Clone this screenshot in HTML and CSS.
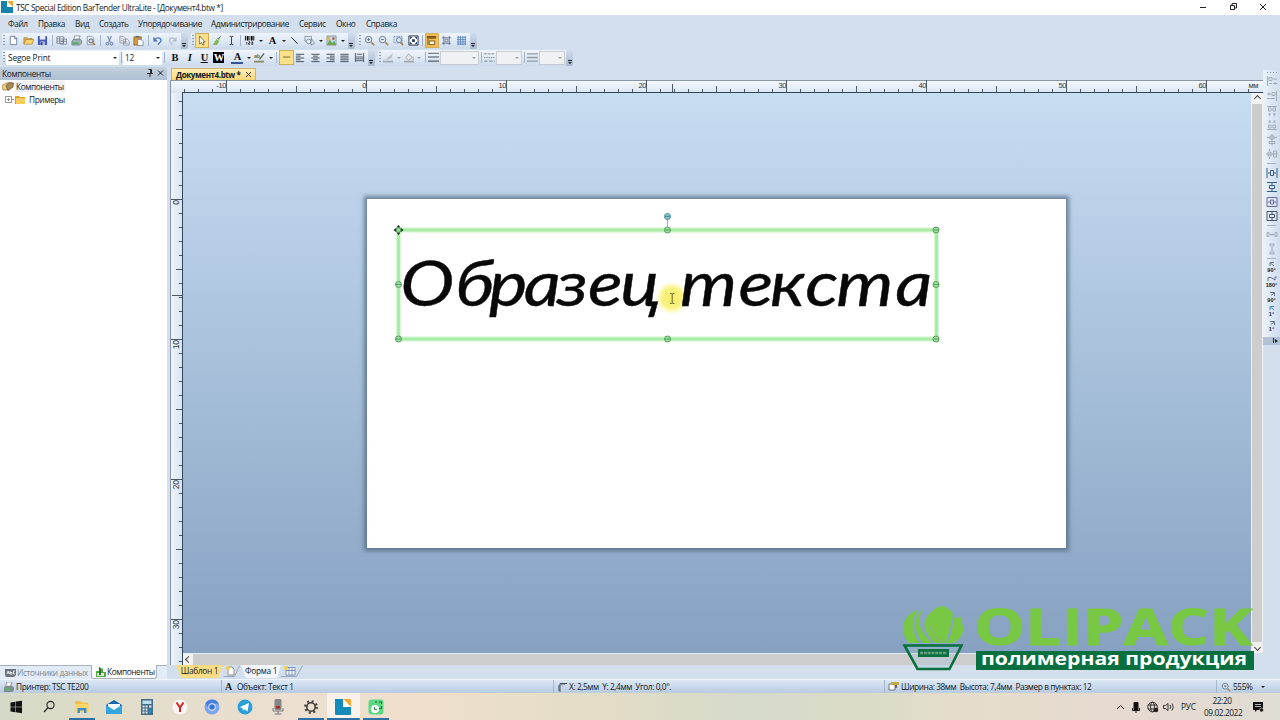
FILE: index.html
```
<!DOCTYPE html>
<html lang="ru">
<head>
  <meta charset="UTF-8">
  <title>TSC Special Edition BarTender UltraLite</title>
  <link rel="stylesheet" href="styles.css">
</head>
<body>
<div class="window">

  <!-- Title bar -->
  <header class="titlebar">
    <svg class="app-icon" width="12" height="12" viewBox="0 0 12 12"><path d="M0 0h6v6h6v6H0z" fill="#1583ac"/><path d="M6 0h6v6z" fill="#efa52f"/></svg>
    <span class="title">TSC Special Edition BarTender UltraLite - [Документ4.btw *]</span>
    <svg class="win-buttons" width="70" height="12" viewBox="0 0 70 12" fill="none" stroke="#222"><path d="M1 6.5h6M31.500 4.500h4v4h-4zM33 4V2.500h4.500v4.500H36M61 3l6 6M67 3l-6 6"/></svg>
  </header>

  <nav class="menubar">
    <span class="m1">Файл</span><span class="m2">Правка</span><span class="m3">Вид</span><span class="m4">Создать</span><span class="m5">Упорядочивание</span><span class="m6">Администрирование</span><span class="m7">Сервис</span><span class="m8">Окно</span><span>Справка</span>
  </nav>

  <!-- Standard toolbars -->
  <div class="toolbars">
    <div class="toolbar">
      <i class="grip"></i>
      <b class="btn"><svg viewBox="0 0 12 12"><path d="M2.500 1.500h5l2 2v7h-7z" fill="#fff" stroke="#71809a"/><path d="M7 1v3h3" fill="none" stroke="#71809a"/></svg></b>
      <b class="btn"><svg viewBox="0 0 12 12"><path d="M1 10V3h4l1 1h4v2" fill="#e9b94c" stroke="#8d7030" stroke-width=".7"/><path d="M1 10l2-5h9l-2 5z" fill="#fbd66e" stroke="#9a7a32" stroke-width=".7"/></svg></b>
      <b class="btn"><svg viewBox="0 0 12 12"><path d="M1 1h9l1 1v9H1z" fill="#4659bd"/><path d="M3 1h6v4H3z" fill="#e7edfa"/><path d="M3.500 7h5v4h-5z" fill="#b9c4e5"/><path d="M4 8h2v3H4z" fill="#26397e"/></svg></b>
      <i class="sep"></i>
      <b class="btn"><svg viewBox="0 0 12 12"><path d="M1 2h7.500v7H1zM1 4.300h7.500M1 6.600h7.500M4 2v7M8.500 4.500h3v5.500H5V9" fill="#fff" stroke="#596a82" stroke-width=".8"/><path d="M5 7h6.500M8 4.500V10" stroke="#596a82" stroke-width=".8"/></svg></b>
      <b class="btn"><svg viewBox="0 0 12 12"><path d="M4 1h6L8.500 5H3z" fill="#fff" stroke="#667" stroke-width=".7"/><path d="M1 6.500L3 4.500h7L11.500 6v3L9.500 11H1z" fill="#9fb0b4" stroke="#5b6a6c" stroke-width=".7"/><path d="M2 8h6v2H2z" fill="#45b557"/></svg></b>
      <b class="btn"><svg viewBox="0 0 12 12"><path d="M2.500 1.500h5l2 2v7h-7z" fill="#fff" stroke="#71809a" stroke-width=".8"/><circle cx="6.500" cy="6.500" r="2.300" fill="#cfe0f2" stroke="#44546a"/><path d="M8 8l3 3" stroke="#a3763d" stroke-width="1.500"/></svg></b>
      <i class="sep"></i>
      <b class="btn"><svg viewBox="0 0 12 12" fill="none" stroke="#576b9b"><path d="M4 1l3 7M8 1L5 8"/><circle cx="3.700" cy="9.500" r="1.500"/><circle cx="8.300" cy="9.500" r="1.500"/></svg></b>
      <b class="btn"><svg viewBox="0 0 12 12" fill="#fff" stroke="#6d7c98" stroke-width=".8"><path d="M1 1.500h4l2 2v5H1zM5 4.500h4l2 2v4.500H5z"/><path d="M2 4h2M2 6h2M6 7h3M6 9h4"/></svg></b>
      <b class="btn"><svg viewBox="0 0 12 12"><path d="M1 2h8v9H1z" fill="#d99a3a" stroke="#7d5b29" stroke-width=".8"/><path d="M3 1h4v2H3z" fill="#687080"/><path d="M5 5h4l2 2v4.500H5z" fill="#fff" stroke="#6d7c98" stroke-width=".8"/></svg></b>
      <i class="sep"></i>
      <b class="btn"><svg viewBox="0 0 12 12"><path d="M3 5c3-3.500 8-1.500 6.500 2L6.500 10.500" fill="none" stroke="#4776c5" stroke-width="1.500"/><path d="M1.500 2v5h5z" fill="#4776c5"/></svg></b>
      <b class="btn"><svg viewBox="0 0 12 12"><path d="M9 5C6 1.500 1.500 3.500 3 7l3 3.500" fill="none" stroke="#b2bdcc" stroke-width="1.300"/><path d="M10.500 2v5h-5z" fill="#b2bdcc"/></svg></b>
      <i class="more"></i>
    </div>
    <div class="toolbar">
      <i class="grip"></i>
      <b class="btn on"><svg viewBox="0 0 12 12"><path d="M4 1v9l2-2 1.500 3 1.500-.8L7.500 7.500H10z" fill="#fff" stroke="#5c5030" stroke-width=".8"/></svg></b>
      <b class="btn"><svg viewBox="0 0 12 12"><path d="M11.500 0L7 4l1.500 1.500z" fill="#777"/><path d="M7 3l2.500 2.500L6.500 11 2 10.500z" fill="#85b84d"/><path d="M6.500 4l2.500 2.500" stroke="#eaf2da"/></svg></b>
      <b class="btn"><svg viewBox="0 0 12 12" fill="none" stroke="#333"><path d="M4 1.500h1.500l.5.500.5-.5H8M6 2v8M4 10.500h1.500l.5-.5.5.500H8"/></svg></b>
      <i class="sep"></i>
      <b class="btn"><svg viewBox="0 0 12 12"><path d="M1 1h1v5H1zM3 1h2v5H3zM6 1h.8v5H6zM7.600 1h1.800v5H7.600zM10.200 1h1v5h-1z"/><path d="M3 7.500v3M5 7.500h1.500v1.300H5v1.400h1.500M8 7.500h1.500V9H8M9.500 9v1.300H8" fill="none" stroke="#111" stroke-width=".8"/></svg></b>
      <i class="drop"></i>
      <b class="btn serif">A</b>
      <i class="drop"></i>
      <b class="btn"><svg viewBox="0 0 12 12"><path d="M2.500 2.500l7 7" stroke="#222"/></svg></b>
      <b class="btn"><svg viewBox="0 0 12 12" fill="#e8eff8" stroke="#66788e" stroke-width=".8"><path d="M1 1.500h7v5H1z"/><circle cx="5" cy="7" r="2.500"/><path d="M8 4l3.500 5-4 2z"/></svg></b>
      <i class="drop"></i>
      <b class="btn"><svg viewBox="0 0 12 12"><path d="M1 1h10v10H1z" fill="#b9d9f2" stroke="#777" stroke-width=".7"/><path d="M1 11l3-6 3 4 2-3 2 5z" fill="#6da44a"/><path d="M1 2h3v4H1z" fill="#e4b043"/><circle cx="8" cy="4" r="1.500" fill="#c6633c"/></svg></b>
      <i class="drop"></i>
      <i class="more"></i>
    </div>
    <div class="toolbar">
      <i class="grip"></i>
      <b class="btn"><svg viewBox="0 0 12 12" fill="#e7f0fa" stroke="#5c6e85"><path d="M8 8l3 3" stroke="#a98550" stroke-width="1.800"/><circle cx="5" cy="5" r="3.500"/><path d="M3.300 5h3.400M5 3.300v3.400"/></svg></b>
      <b class="btn"><svg viewBox="0 0 12 12" fill="#e7f0fa" stroke="#5c6e85"><path d="M8 8l3 3" stroke="#a98550" stroke-width="1.800"/><circle cx="5" cy="5" r="3.500"/><path d="M3.300 5h3.400"/></svg></b>
      <b class="btn"><svg viewBox="0 0 12 12" fill="#dbe8f6" stroke="#5c6e85" stroke-width=".9"><path d="M1 1.500h9v7H1z" stroke="#6079a8" stroke-dasharray="1.500 1"/><path d="M8 8l3 3" stroke="#a98550" stroke-width="1.800"/><circle cx="6.500" cy="5.500" r="2.800"/></svg></b>
      <b class="btn"><svg viewBox="0 0 12 12"><path d="M1 1h10v10H1z" fill="#fff" stroke="#1d2c48"/><path d="M2 2h3L2 5zM10 2v3L7 2zM2 10V7l3 3zM10 10H7l3-3zM4.500 4.500h3v3h-3z" fill="#2c406a"/></svg></b>
      <i class="sep"></i>
      <b class="btn on deep"><svg viewBox="0 0 12 12"><path d="M1 1h10v3H1z" fill="#7b5a20"/><path d="M1 4h2v7H1z" fill="#b68735"/><path d="M3.500 6.500h6v4h-6z" fill="#fff8df" stroke="#6e5220"/></svg></b>
      <b class="btn"><svg viewBox="0 0 12 12" fill="none" stroke="#596b86" stroke-width=".9"><path d="M3 1v10M9 1v10M1 3h10M1 9h10"/><path d="M4.500 4.500h3v3h-3z" fill="#fff"/></svg></b>
      <b class="btn"><svg viewBox="0 0 12 12" fill="none" stroke="#4877b8" stroke-width=".8"><path d="M2.500 1v10M5 1v10M7.500 1v10M10 1v10M1 2.500h10M1 5h10M1 7.500h10M1 10h10"/></svg></b>
      <i class="more"></i>
    </div>
  </div>

  <!-- Text and line format toolbars -->
  <div class="toolbars">
    <div class="toolbar">
      <i class="grip"></i>
      <span class="combo font">Segoe Print<i class="drop"></i></span>
      <i class="sep"></i>
      <span class="combo size">12<i class="drop"></i></span>
      <i class="sep wide"></i>
      <b class="btn serif">B</b>
      <b class="btn serif it">I</b>
      <b class="btn serif un">U</b>
      <b class="btn serif inv">W</b>
      <i class="sep blank"></i>
      <b class="btn serif color">A</b>
      <i class="drop"></i>
      <b class="btn"><svg viewBox="0 0 12 12"><path d="M0 9.500h11v2H0z" fill="#8b8c5d"/><path d="M11.500 2L7 8 5.500 8.500 6 7l4.500-6z" fill="#555"/><text x="0" y="6" class="ab">ab</text></svg></b>
      <i class="drop"></i>
      <i class="sep"></i>
      <b class="btn on"><svg viewBox="0 0 12 12"><path d="M2 5.500h8" stroke="#76612a"/></svg></b>
      <b class="btn"><svg viewBox="0 0 12 12" stroke="#3d4654"><path d="M1 2.500h9M1 4.500h5M1 6.500h9M1 8.500h5M1 10.500h9"/></svg></b>
      <b class="btn"><svg viewBox="0 0 12 12" stroke="#3d4654"><path d="M1.500 2.500h9M3.500 4.500h5M1.500 6.500h9M3.500 8.500h5M1.500 10.500h9"/></svg></b>
      <b class="btn"><svg viewBox="0 0 12 12" stroke="#3d4654"><path d="M1.500 2.500h9M5.500 4.500h5M1.500 6.500h9M5.500 8.500h5M1.500 10.500h9"/></svg></b>
      <b class="btn"><svg viewBox="0 0 12 12" stroke="#3d4654"><path d="M1.500 2.500h9M1.500 4.500h9M1.500 6.500h9M1.500 8.500h9M1.500 10.500h9"/></svg></b>
      <b class="btn"><svg viewBox="0 0 12 12" stroke="#4a5362"><path d="M1.500 1v10M10.500 1v10M3 2.500h6M2 5.500h8M2 7.500h8M2 9.500h8"/></svg></b>
      <i class="more"></i>
    </div>
    <div class="toolbar lines">
      <i class="grip"></i>
      <b class="btn"><svg viewBox="0 0 12 12"><path d="M0 9.500h11v2H0z" fill="#a6aaae"/><path d="M11 1L9 7l-6 2 2-3z" fill="#bcc1c6"/></svg></b>
      <i class="drop off"></i>
      <b class="btn"><svg viewBox="0 0 12 12"><path d="M0 9.500h11v2H0z" fill="#a6aaae"/><path d="M5 2l4 4-4 3-3-3z" fill="#e4e8ec" stroke="#a4a9ae"/><path d="M10 5v4" stroke="#a4a9ae"/></svg></b>
      <i class="drop off"></i>
      <i class="sep"></i>
      <b class="btn"><svg viewBox="0 0 12 12" stroke="#7a838c"><path d="M0 1.500h12M0 5.500h12" stroke-width="1.500"/><path d="M0 10h12" stroke-width="2"/></svg></b>
      <span class="combo c1"><i class="drop off"></i></span>
      <i class="sep"></i>
      <b class="btn"><svg viewBox="0 0 12 12" stroke="#7a838c"><path d="M0 2h12" stroke-dasharray="3 1"/><path d="M0 6h12" stroke-dasharray="1.500 1"/><path d="M0 10h12" stroke-dasharray="4 1.500"/></svg></b>
      <span class="combo c2"><i class="drop off"></i></span>
      <i class="sep"></i>
      <b class="btn"><svg viewBox="0 0 12 12" stroke="#929aa2" stroke-width="1.500"><path d="M0 2h12M0 6h12M0 10h12"/></svg></b>
      <span class="combo c3"><i class="drop off"></i></span>
      <i class="more"></i>
    </div>
  </div>

  <main class="workspace">
    <!-- Components panel -->
    <aside class="panel">
      <div class="panel-head">
        <span>Компоненты</span>
        <svg width="20" height="10" viewBox="0 0 20 10" fill="none" stroke="#222"><path d="M3.500 1.500h3v4M2 5.500h6M5 6v3M5.700 1.500v4M13 2.500l5 5M18 2.500l-5 5"/></svg>
      </div>
      <div class="tree">
        <div class="node">
          <svg width="12" height="11" viewBox="0 0 12 11"><path d="M0 4.500L4 2h3l1 2-2 5H1z" fill="#f0cd80" stroke="#9a7a3c" stroke-width=".7"/><path d="M4 5l3-3.500L11.500 2 11 6 6 9.500z" fill="#a88a56" stroke="#5f4a28" stroke-width=".7"/></svg>
          <span class="sel">Компоненты</span>
        </div>
        <div class="node child">
          <svg width="20" height="11" viewBox="0 0 20 11"><path d="M.5 2.500h6v6h-6zM2 5.500h3M3.500 4v3M7 5.500h2" fill="#fff" stroke="#8a8a8a" stroke-width=".9"/><path d="M10 2h4l1 1h5v7H10z" fill="#d99f28"/><path d="M11 4h9v6h-9z" fill="#f9cd58"/></svg>
          <span>Примеры</span>
        </div>
      </div>
      <div class="panel-tabs">
        <span class="ptab"><svg width="11" height="9" viewBox="0 0 11 9"><path d="M0 1h11v6l-2 2H1L0 7z" fill="#6d737a"/><path d="M2 6l1-3 1 3M5 3v3h2V4.500H5M10 3H8.500v3H10" stroke="#fff" stroke-width=".8" fill="none"/></svg>Источники данных</span>
        <span class="ptab active"><svg width="11" height="12" viewBox="0 0 11 12"><path d="M1 5h3V1l4 2v3h3v5H1z" fill="#54a741"/><path d="M2 7h7v3H2z" fill="#d7ecd0"/><path d="M4 1l2 2v6H4z" fill="#2e6d33"/></svg>Компоненты</span>
      </div>
    </aside>

    <!-- Document -->
    <section class="document">
      <div class="doc-tabs"><span class="doc-tab">Документ4.btw * <svg width="7" height="7" viewBox="0 0 7 7"><path d="M1 1l5 5M6 1L1 6" stroke="#333"/></svg></span></div>
      <div class="editor">
        <svg class="ruler-top" id="rulerTop" width="1092" height="13"></svg>
        <svg class="ruler-left" id="rulerLeft" width="12" height="572"></svg>
        <div class="canvas">
          <div class="sheet">
            <svg width="699" height="349" viewBox="0 0 699 349">
              <defs>
                <radialGradient id="glow"><stop offset="0" stop-color="#f7ee66"/><stop offset=".6" stop-color="#faf283"/><stop offset="1" stop-color="#fdf9b0" stop-opacity="0"/></radialGradient>
              </defs>
              <path class="frame-glow" d="M31.500 31h538v109h-538z"/>
              <path class="frame" d="M31.500 31h538v109h-538z"/>
              <circle cx="305" cy="99" r="17" fill="url(#glow)"/>
              <g transform="scale(1.17 1)">
                <text class="sample" x="28.500 75.500 104.300 134 162 189 216.500" y="107">Образец</text>
                <text class="sample" x="267.500 317.500 344.400 374.500 401 451.500" y="107">текста</text>
              </g>
              <path d="M300.500 18v12" stroke="#7fc4c8"/>
              <g class="handles">
                <circle cx="300.500" cy="31" r="3"/><circle cx="569" cy="31" r="3"/>
                <circle cx="31.500" cy="85.500" r="3"/><circle cx="569" cy="85.500" r="3"/>
                <circle cx="31.500" cy="140" r="3"/><circle cx="300.500" cy="140" r="3"/><circle cx="569" cy="140" r="3"/>
                <path d="M298 31h5M567 31h5M29 85.500h5M567 85.500h5M29 140h5M298 140h5M567 140h5"/>
              </g>
              <circle cx="300.500" cy="17.500" r="3" fill="#7fc6d2" stroke="#4f8f9c"/><path d="M298 17.500h5" stroke="#4f8f9c"/>
              <path d="M31.500 26l2 2.500h-4zM31.500 36l2-2.500h-4zM26.500 31l2.500-2v4zM36.500 31l-2.500-2v4z" fill="#222"/><circle cx="31.500" cy="31" r="2.500" fill="#8fdc8f" stroke="#3c7b45" stroke-width=".8"/>
              <path d="M303 94.500h1.500l.7.500.7-.5h1.500M305.200 95v9M303 104.500h1.500l.7-.5.7.500h1.500" fill="none" stroke="#6a662a"/>
            </svg>
          </div>
        </div>
        <div class="vscroll"><i class="up"></i><b></b><i class="down"></i></div>
        <div class="hscroll"><i></i></div>
      </div>
      <div class="sheet-tabs">
        <span class="stab active">Шаблон 1</span>
        <svg width="18" height="13" viewBox="0 0 18 13"><path d="M.5 11.500h11l5-11" fill="none" stroke="#8a97a8" stroke-width=".8"/><path d="M5 2h4l2 2v6H5z" fill="#fff" stroke="#777" stroke-width=".8"/><circle cx="5" cy="3" r="2" fill="#f3cf42"/></svg>
        <span class="stab">Форма 1</span>
        <svg width="26" height="13" viewBox="0 0 26 13"><path d="M0 11.500h15.500l6-11" fill="none" stroke="#8a97a8" stroke-width=".8"/><path d="M5 2.500h9V10H5zM5 5.500h9M8 3v7M11 3v7" fill="#fff" stroke="#5b7aac" stroke-width=".8"/><circle cx="5" cy="3" r="2" fill="#f3cf42"/></svg>
      </div>
    </section>

    <!-- Arrange toolbar -->
    <aside class="arrange">
      <i class="dots"></i>
      <svg class="off" viewBox="0 0 12 12"><path d="M1.500 1v10M3 2.500h3v3H3zM7 4h4M3 8.500h3M7 8.500h4M9 7v3"/></svg>
      <svg class="off" viewBox="0 0 12 12"><path d="M10.500 1v10M6 2.500h3v3H6zM1 4h4M1 8.500h8M3 2.500v3"/></svg>
      <svg class="off" viewBox="0 0 12 12"><path d="M1 1.500h10M2.500 3h2.500v3H2.500zM7 3h2.500v3H7zM3.700 8v3M8.300 8v3M2.500 9h2.500M7 9h2.500"/></svg>
      <svg class="off" viewBox="0 0 12 12"><path d="M1 10.500h10M2.500 6h2.500v3H2.500zM7 6h2.500v3H7zM3.700 1v3M8.300 1v3M2.500 3h2.500M7 3h2.500"/></svg>
      <svg class="off" viewBox="0 0 12 12"><path d="M6 0v12M1 3.500h3M8 3.500h3M4 2h4v3H4zM3 7.500h6v2H3z"/></svg>
      <svg class="off" viewBox="0 0 12 12"><path d="M0 6h12M2 4h3v4H2zM7.500 3h3v6h-3zM3.500 1v2M3.500 9v2"/></svg>
      <i class="hsep"></i>
      <svg viewBox="0 0 12 12"><path d="M1 1v10M11 1v10M4.500 3.500h3v5h-3zM2 6h2.500M7.500 6H10"/></svg>
      <svg viewBox="0 0 12 12"><path d="M1 1.500h10M1 10.500h10M3.500 4.500h5v3h-5zM6 2v2.500M6 7.500V10"/></svg>
      <svg class="violet" viewBox="0 0 12 12"><path d="M1 1.500h10v9H1zM4.500 4h3v4h-3zM2 6h2.500M7.500 6H10"/></svg>
      <svg class="dark" viewBox="0 0 12 12"><path d="M1 1.500h10v9H1zM3.500 4.500h5v3h-5zM6 2v2.500M6 7.500V10"/></svg>
      <i class="hsep"></i>
      <svg class="off" viewBox="0 0 12 12"><path d="M1 3.500h2v4H1zM9 3.500h2v4H9zM4 5.500h4M5 4.500v2M7 4.500v2"/></svg>
      <svg class="off" viewBox="0 0 12 12"><path d="M4 1h4v2H4zM4 9h4v2H4zM6 4v4"/></svg>
      <i class="hsep"></i>
      <span class="rot"><svg viewBox="0 0 12 6"><path d="M4 5V1.500h4M8 5L4.500 2"/></svg>90°</span>
      <span class="rot"><svg viewBox="0 0 12 6"><path d="M2 5V1.500h3L9 4V1h2"/></svg>180°</span>
      <span class="rot"><svg viewBox="0 0 12 6"><path d="M4 1.500h4.500V5M5 4.500L8 2"/></svg>90°</span>
      <span class="rot blue"><svg viewBox="0 0 12 6"><path d="M4 5V1.500h4M8 5L4.500 2"/></svg>1°</span>
      <span class="rot"><svg viewBox="0 0 12 6"><path d="M4 1.500h4.500V5M5 4.500L8 2"/></svg>1°</span>
      <i class="more-v"></i>
    </aside>
  </main>

  <footer class="statusbar">
    <span class="s1"><svg width="11" height="10" viewBox="0 0 12 11"><path d="M4 0h6L8 5H3z" fill="#fff" stroke="#667" stroke-width=".7"/><path d="M1 6l2-2h7l2 2v3l-2 2H1z" fill="#7e8d90"/><path d="M2 7h6v2H2z" fill="#55ba62"/></svg>Принтер: TSC TE200</span>
    <span class="s2"><b>A</b>Объект: Текст 1</span>
    <span class="s3"><svg width="10" height="10" viewBox="0 0 10 10"><path d="M1 4h2v6M3 4V1.500h7M1 6h2M1 8h2M5 1.500v2M7 1.500v1.500" fill="none" stroke="#444f5e"/></svg>X: 2,5мм&nbsp; Y: 2,4мм&nbsp; Угол: 0,0°.</span>
    <span class="s4"><svg width="11" height="9" viewBox="0 0 11 9"><path d="M1 2h6v6H1z" fill="#fff" stroke="#556" stroke-width=".8"/><path d="M3 0h8v3H3z" fill="#c6a93d"/><path d="M7 3h2v3H7z" fill="#667"/></svg>Ширина: 38мм&nbsp; Высота: 7,4мм&nbsp; Размер в пунктах: 12</span>
    <span class="s5"><svg width="10" height="10" viewBox="0 0 12 12" fill="#e7f0fa" stroke="#5c6e85"><path d="M8 8l3 3" stroke="#a98550" stroke-width="1.800"/><circle cx="5" cy="5" r="3.500"/><path d="M3.300 5h3.400M5 3.300v3.400"/></svg>555%<i class="drop"></i></span>
  </footer>

  <!-- Windows taskbar -->
  <footer class="taskbar">
    <span class="app"><svg viewBox="0 0 18 18"><path d="M3.500 4.500l5-.8v5H3.500zM9 3.600l6-.9v6H9zM3.500 9.200h5v5l-5-.8zM9 9.200h6v6l-6-.9z" fill="#111"/></svg></span>
    <span class="app"><svg viewBox="0 0 18 18"><circle cx="10.500" cy="7" r="3.600" fill="none" stroke="#222" stroke-width="1.100"/><path d="M8 9.600l-4 4.400" stroke="#222" stroke-width="1.200"/></svg></span>
    <span class="app run"><svg viewBox="0 0 18 18"><path d="M2 3h5l1.500 1.500H15V14H2z" fill="#f3c04a"/><path d="M2 6h14v8H2z" fill="#fbd56d"/><path d="M4.500 15v-5h9v5h-2.500v-2.500h-4V15z" fill="#3d8fd0"/></svg></span>
    <span class="app"><svg viewBox="0 0 18 18"><path d="M1 7l8-5 8 5v9H1z" fill="#1665ab"/><path d="M3 6h12v6H3z" fill="#f2f8fc"/><path d="M1 7l8 5 8-5v9H1z" fill="#32a5df"/></svg></span>
    <span class="app"><svg viewBox="0 0 18 18"><path d="M3 1h12v16H3z" fill="#466d85"/><path d="M4.500 2.500h9v3.500h-9z" fill="#b9dff1"/><g fill="#d7e4ea"><path d="M4.500 7.500h2v2h-2zM7.500 7.500h2v2h-2zM4.500 10.500h2v2h-2zM7.500 10.500h2v2h-2zM4.500 13.500h2v2h-2zM7.500 13.500h2v2h-2zM11 7.500h2.500v2H11z"/></g><path d="M11 10.500h2.500v5H11z" fill="#2588c6"/></svg></span>
    <span class="app"><svg viewBox="0 0 18 18"><circle cx="9" cy="9" r="7.500" fill="#fbf6f2"/><path d="M5.500 4.500L9 9.500l3.500-5M9 9v5" fill="none" stroke="#d5222a" stroke-width="2"/></svg></span>
    <span class="app"><svg viewBox="0 0 18 18"><circle cx="9" cy="9" r="7.500" fill="#7ba5ee"/><path d="M9 1.500a7.500 7.500 0 0 1 6.700 4.200H9a3.500 3.500 0 0 0-3 5L2.500 5.300A7.500 7.500 0 0 1 9 1.500z" fill="#477fdc"/><circle cx="9" cy="9" r="3.700" fill="#eef4fc"/><circle cx="9" cy="9" r="2.800" fill="#3973d8"/></svg></span>
    <span class="app"><svg viewBox="0 0 18 18"><circle cx="9" cy="9" r="7.500" fill="#2d9fd8"/><path d="M4 9l9-4-1.500 8.500-3-2.200-1.500 1.500-.5-2.500z" fill="#fff"/></svg></span>
    <span class="app"><svg viewBox="0 0 18 18"><rect x="5.500" y="1" width="7" height="11" rx="1.500" fill="#858585"/><path d="M7 8h4v2.500H7z" fill="#a52c20"/><path d="M4 10v3h10v-3M9 13v3M5.500 16h7" fill="none" stroke="#777"/></svg></span>
    <span class="app run"><svg viewBox="0 0 18 18"><circle cx="9" cy="9" r="4.200" fill="none" stroke="#3e3b39" stroke-width="1.600"/><circle cx="9" cy="9" r="5.900" fill="none" stroke="#3e3b39" stroke-width="2" stroke-dasharray="2 2.630"/></svg></span>
    <span class="app run current"><svg viewBox="0 0 18 18"><path d="M1 1h8v8h8v7a1 1 0 0 1-1 1H2a1 1 0 0 1-1-1z" fill="#148cb9"/><path d="M9 1h7a1 1 0 0 1 1 1v7z" fill="#f3a72e"/><path d="M9 1l8 8H9z" fill="#fff"/></svg></span>
    <span class="app run"><svg viewBox="0 0 18 18"><rect x="1.500" y="1.500" width="15" height="15" rx="3" fill="#5bd982"/><path d="M8 4h2M12 4h2.500v2M14.500 8v2.500H12" fill="none" stroke="#176a38"/><circle cx="8" cy="11" r="4" fill="#fff"/><path d="M7.500 9v2.500H10" fill="none" stroke="#2b8d4d"/></svg></span>
    <div class="tray">
      <svg width="60" height="14" viewBox="0 0 60 14"><path d="M1 9l3.500-3.500L8 9" fill="none" stroke="#222"/><rect x="17.500" y="2" width="5" height="8" rx="1" fill="#111"/><path d="M16.500 8v2.500h7V8M20 10.500V13" fill="none" stroke="#111"/><g fill="none" stroke="#222" stroke-width=".9"><circle cx="36.500" cy="7" r="4.800"/><ellipse cx="36.500" cy="7" rx="2" ry="4.800"/><path d="M32 5h9M32 9h9M47.500 5.500h2l2.500-2v7l-2.500-2h-2zM54 5q1.500 2 0 4M56 3.500q2.500 3.500 0 7"/></g><circle cx="40" cy="10" r="2.300" fill="#222"/></svg>
      <span class="lang">РУС</span>
      <span class="clock">22:20<br>09.02.2022</span>
      <svg width="12" height="12" viewBox="0 0 12 12"><path d="M1 1h10v8H5l-2 2V9H1z" fill="#111"/><path d="M3 3.500h6M3 5.500h6" stroke="#ddd" stroke-width=".8"/><circle cx="9.500" cy="9" r="2" fill="#111" stroke="#e6dcd0" stroke-width=".6"/></svg>
    </div>
  </footer>

  <!-- Watermark -->
  <div class="watermark">
    <svg width="72" height="72" viewBox="0 0 72 72">
      <g fill="#78c843">
        <path d="M18 9C10 11 3 18 3 28c0 6 3 10 6 14h11C12 33 10 20 18 9z"/>
        <path d="M23 8c-10 8-10 22 0 34h9C20 31 16 20 23 8z"/>
        <path d="M41 5c7 1 10 4 12 8-1 10-4 17-7 29H35C22 30 22 20 30 12c3-3 6-5 11-7z"/>
        <path d="M54 17l8-1c-2 4 2 8 1 14-1 6-6 10-10 12h-6c4-8 6-15 7-25z"/>
      </g>
      <path d="M29 22c2 9 6 16 14 19" fill="none" stroke="#8cb07a" stroke-width="1.200"/>
      <path d="M4.500 44.500h57L49.500 68h-32z" fill="#a9c2d6" fill-opacity=".35" stroke="#08703f" stroke-width="2.600"/>
      <path d="M18 48h31v8H18z" fill="#08703f"/><path d="M20 52h27" stroke="#6c9c80" stroke-width="2.500" stroke-dasharray="3 .8"/>
    </svg>
    <svg class="wm-text" width="280" height="72" viewBox="0 0 280 72">
      <path d="M4 50h278v19H4z" fill="#08703f"/>
      <text class="wm-name" x="2" y="43.500" textLength="278" lengthAdjust="spacingAndGlyphs">OLIPACK</text>
      <text class="wm-sub" x="9" y="64" textLength="266" lengthAdjust="spacingAndGlyphs">полимерная продукция</text>
    </svg>
  </div>
</div>
<script src="script.js"></script>
</body>
</html>
```
FILE: styles.css
```
* {
  box-sizing: border-box;
}

body {
  margin: 0;
  font-family: "Open Sans", "Noto Sans", sans-serif;
  font-size: 8.3px;
  letter-spacing: -0.4px;
  color: #141a24;
  background: #d3dfed;
  overflow: hidden;
}

.window {
  position: relative;
  width: 1280px;
  height: 720px;
  display: flex;
  flex-direction: column;
  white-space: nowrap;
}

/* Title and menu */
.titlebar {
  height: 15px;
  display: flex;
  align-items: center;
  background: #fff;
}

.app-icon {
  margin: 0 3px 0 1px;
}

.title {
  flex: 1;
}

.win-buttons {
  margin-right: 11px;
}

.menubar {
  height: 18px;
  display: flex;
  align-items: center;
  padding-left: 8px;
}

.m1 { width: 30px; }
.m2 { width: 37px; }
.m3 { width: 24px; }
.m4 { width: 39px; }
.m5 { width: 73px; }
.m6 { width: 88px; }
.m7 { width: 37px; }
.m8 { width: 30px; }

/* Toolbars */
.toolbars {
  height: 17px;
  display: flex;
  gap: 3px;
  padding-left: 2px;
}

.toolbar {
  height: 16px;
  display: flex;
  align-items: center;
  border-radius: 2px;
  background: linear-gradient(#eef4fb, #dbe6f4 60%, #cbd9ea);
}

.grip {
  width: 2px;
  height: 11px;
  margin: 0 1px;
  background: repeating-linear-gradient(#8798ae 0 1px, transparent 1px 3px);
}

.btn {
  width: 14.7px;
  height: 15px;
  display: flex;
  align-items: center;
  justify-content: center;
}

.btn svg {
  width: 11px;
  height: 11px;
}

.btn.on {
  background: #fbe08a;
  border: 1px solid #d1ad55;
}

.btn.deep {
  background: #f6bf55;
}

.serif {
  font-family: "Liberation Serif", serif;
  font-size: 10.5px;
  color: #111;
}

.it {
  font-style: italic;
}

.un {
  text-decoration: underline;
}

.inv {
  width: 11px;
  height: 11px;
  margin: 0 1.8px;
  color: #fff;
  background: #000;
}

.color {
  height: 12px;
  width: 12px;
  margin: 0 1.3px;
  border-bottom: 2px solid #34539a;
}

.ab {
  font: bold 6px "Liberation Sans", sans-serif;
  fill: #6b6f22;
}

.sep {
  width: 1px;
  height: 11px;
  margin: 0 1.5px;
  background: #a3b2c5;
}

.sep.wide {
  margin-right: 3px;
}

.sep.blank {
  background: none;
}

.drop {
  width: 7.7px;
  display: flex;
  justify-content: center;
}

.drop::before {
  content: "";
  border: 2px solid transparent;
  border-top: 2.5px solid #222;
  border-bottom: 0;
}

.drop.off::before {
  border-top-color: #9a9fa5;
}

.more {
  width: 7px;
  height: 16px;
  margin-left: 1px;
  display: flex;
  flex-direction: column;
  align-items: center;
  justify-content: flex-end;
  gap: 1px;
  padding-bottom: 2px;
  border-radius: 0 2px 2px 0;
  background: linear-gradient(#cfdcec, #a9bad0);
}

.more::before {
  content: "";
  width: 4px;
  height: 1px;
  background: #222;
}

.more::after {
  content: "";
  border: 2px solid transparent;
  border-top-color: #222;
  border-bottom: 0;
}

.combo {
  height: 14px;
  display: flex;
  align-items: center;
  justify-content: space-between;
  padding-left: 2px;
  letter-spacing: -0.15px;
  background: #fff;
}

.font { width: 113px; }
.size { width: 39px; }
.c1 { width: 39px; }
.c2 { width: 26px; }
.c3 { width: 26px; }

.lines .btn {
  width: 13px;
}

.lines .combo {
  justify-content: flex-end;
  background: #f0f1f2;
  border: 1px solid #c6ccd2;
}

/* Workspace */
.workspace {
  height: 613px;
  display: flex;
}

.panel {
  width: 167px;
  display: flex;
  flex-direction: column;
  background: #fff;
}

.panel-head {
  height: 13px;
  display: flex;
  align-items: center;
  justify-content: space-between;
  padding: 0 2px;
  letter-spacing: -0.3px;
  background: linear-gradient(#c2d0df, #afc0d2);
}

.tree {
  flex: 1;
}

.node {
  height: 13px;
  display: flex;
  align-items: center;
  gap: 1px;
  padding-left: 2px;
}

.sel {
  padding: 0 1px;
  background: #f1f0f2;
}

.child {
  gap: 4px;
  padding-left: 5px;
}

.panel-tabs {
  height: 14px;
  display: flex;
  background: #e3ecf6;
  border-top: 1px solid #a7b1bd;
}

.ptab {
  width: 91px;
  display: flex;
  align-items: center;
  gap: 1px;
  padding-left: 5px;
  color: #7f858c;
}

.ptab.active {
  width: 66px;
  margin-top: -1px;
  padding-left: 3px;
  color: #141a24;
  background: #fff;
  border: 1px solid #a7b1bd;
  border-top: 0;
  border-radius: 0 0 3px 3px;
}

.document {
  width: 1095px;
  padding-left: 3px;
}

.doc-tabs {
  height: 13px;
  display: flex;
  align-items: flex-end;
  padding-left: 1px;
}

.doc-tab {
  width: 85px;
  height: 12px;
  display: flex;
  align-items: center;
  justify-content: space-between;
  padding: 0 3px 0 4px;
  font-size: 8px;
  font-weight: bold;
  background: linear-gradient(#fdeeb5, #f7d573);
  border: 1px solid #c9b377;
  border-bottom: 0;
}

.editor {
  width: 1092px;
  height: 585px;
  display: grid;
  grid-template: 13px 560px 12px / 12px 1068px 12px;
  border-left: 1px solid #8996a5;
}

.ruler-top {
  grid-area: 1 / 1 / 2 / 4;
  background: linear-gradient(#8996a5 0 1px, #f4f8fd 1px, #dae6f3);
}

.ruler-left {
  grid-area: 2 / 1 / 4 / 2;
  background: linear-gradient(90deg, #edf3fa, #d9e5f2);
}

.ruler-top text,
.ruler-left text {
  font: 7.5px "Liberation Sans", sans-serif;
  text-anchor: end;
  fill: #2d3742;
}

.ruler-left text {
  font-size: 8.5px;
}

.tick {
  stroke: #4c5866;
}

.edge {
  stroke: #33475c;
}

.canvas {
  position: relative;
  overflow: hidden;
  background: linear-gradient(#c7ddf2, #86a1c1);
}

.sheet {
  position: absolute;
  left: 184px;
  top: 106px;
  width: 699px;
  height: 349px;
  background: #fff;
  box-shadow: 0 0 4px 3px rgba(75, 97, 122, 0.7);
}

.frame {
  fill: none;
  stroke: #abeaa9;
  stroke-width: 3;
}

.frame-glow {
  fill: none;
  stroke: #d9fad7;
  stroke-width: 5.5;
}

.handles circle {
  fill: #9be29b;
  stroke: #5b9b62;
}

.handles path {
  stroke: #5b9b62;
}

.sample {
  font: italic 62px Lato, "Open Sans", sans-serif;
  letter-spacing: 0;
  fill: #080808;
  stroke: #080808;
  stroke-width: 0.4;
}

.vscroll {
  display: flex;
  flex-direction: column;
  padding-left: 1px;
  background: #eef1f4;
}

.vscroll b {
  flex: 1;
  margin-right: 1px;
  background: #cdcdcd;
}

.vscroll i,
.hscroll i {
  width: 10px;
  height: 11px;
  display: flex;
  align-items: center;
  justify-content: center;
  background: #f2f2f2;
}

.vscroll i::before,
.hscroll i::before {
  content: "";
  width: 4px;
  height: 4px;
  border: solid #444;
  border-width: 1px 0 0 1px;
  transform: rotate(45deg);
}

.vscroll .down::before {
  transform: rotate(225deg);
}

.hscroll {
  grid-area: 3 / 2 / 4 / 4;
  display: flex;
  margin-right: 12px;
  background: #cdcdcd;
  border-top: 1px solid #e6edf5;
}

.hscroll i::before {
  transform: rotate(-45deg);
}

.sheet-tabs {
  height: 13px;
  display: flex;
  padding-left: 6px;
}

.stab {
  width: 40px;
  line-height: 11px;
  text-align: center;
  letter-spacing: -0.3px;
  background: #f3f7fc;
  clip-path: polygon(0 0, 100% 0, 90% 100%, 12% 100%);
}

.stab.active {
  width: 47px;
  background: #fbdc83;
}

/* Arrange toolbar */
.arrange {
  width: 17px;
  height: 275px;
  margin-left: 1px;
  margin-top: 3px;
  display: flex;
  flex-direction: column;
  align-items: center;
  gap: 2.6px;
  background: linear-gradient(90deg, #eaf2fb, #cfddee);
}

.arrange > svg {
  width: 12px;
  height: 12px;
  flex: none;
  fill: none;
  stroke: #3a5d84;
}

.arrange > svg.off {
  stroke: #a2acb8;
}

.arrange > svg.violet {
  stroke: #6c6b96;
}

.arrange > svg.dark {
  stroke: #4a5560;
}

.dots {
  width: 10px;
  height: 1px;
  margin-top: 2px;
  flex: none;
  background: repeating-linear-gradient(90deg, #8798ae 0 1px, transparent 1px 3px);
}

.hsep {
  width: 9px;
  height: 1px;
  flex: none;
  background: #a3b2c5;
}

.rot {
  height: 12px;
  flex: none;
  display: flex;
  flex-direction: column;
  align-items: center;
  font: bold 5.5px/6px "Liberation Sans", sans-serif;
  letter-spacing: 0;
}

.rot svg {
  width: 12px;
  height: 6px;
  fill: none;
  stroke: #66718a;
}

.rot.blue svg {
  stroke: #3f8fc0;
}

.more-v {
  width: 17px;
  height: 8px;
  margin-top: auto;
  flex: none;
  display: flex;
  align-items: center;
  justify-content: flex-end;
  gap: 1px;
  padding-right: 2px;
  background: #b2c3d8;
}

.more-v::before {
  content: "";
  width: 1px;
  height: 5px;
  background: #222;
}

.more-v::after {
  content: "";
  border: 2.5px solid transparent;
  border-left: 3px solid #222;
  border-right: 0;
}

/* Status bar */
.statusbar {
  height: 14px;
  margin-top: auto;
  display: flex;
  background: linear-gradient(#dce8f5, #b9cbe0);
  border-top: 1px solid #eef4fa;
}

.statusbar span {
  display: flex;
  align-items: center;
  gap: 2px;
  padding-left: 3px;
}

.statusbar b {
  width: 10px;
  font: bold 10px "Liberation Serif", serif;
}

.statusbar .s1 { width: 221px; }
.statusbar .s2 { width: 332px; }
.statusbar .s3 { width: 331px; }
.statusbar .s4 { width: 332px; }

.statusbar .s2,
.statusbar .s3,
.statusbar .s4,
.statusbar .s5 {
  border-left: 1px solid #a6b7cb;
}

.statusbar .s5 {
  padding-left: 4px;
}

.s5 .drop {
  margin-left: 5px;
}

/* Taskbar */
.taskbar {
  height: 27px;
  display: flex;
  background: linear-gradient(90deg, #d3d9c6, #dfddc9 8%, #ecdfd0 22%, #eee0cb 34%, #e2dcc6 48%, #d6dacb 58%, #dbdcc8 68%, #e5ddcc 76%, #e6d9d0 88%, #dfdcd2);
}

.app {
  width: 32.7px;
  display: flex;
  align-items: center;
  justify-content: center;
}

.app svg {
  width: 18px;
  height: 18px;
}

.run {
  background: linear-gradient(#2d70a5, #2d70a5) center bottom / 26px 2px no-repeat;
}

.current {
  background-color: #f9f2ea;
  background-size: 100% 2px;
}

.tray {
  margin-left: auto;
  padding-right: 16px;
  display: flex;
  align-items: center;
}

.lang {
  margin: 0 8px 0 5px;
  letter-spacing: -0.1px;
}

.clock {
  width: 36px;
  margin-right: 12px;
  line-height: 12px;
  text-align: center;
}

.watermark {
  position: absolute;
  left: 900px;
  top: 601px;
  display: flex;
}

.wm-text {
  overflow: visible;
  letter-spacing: 0;
}

.wm-name {
  font: bold 50px "Open Sans", sans-serif;
  fill: #78c843;
  stroke: #78c843;
  stroke-width: 1;
}

.wm-sub {
  font: bold 18px "Open Sans", sans-serif;
  fill: #fff;
}
```
FILE: script.js
```
const NS = "http://www.w3.org/2000/svg";

function add(svg, name, attrs, text) {
  const el = document.createElementNS(NS, name);
  for (const key in attrs) el.setAttribute(key, attrs[key]);
  if (text !== undefined) el.textContent = text;
  svg.appendChild(el);
}

function tickSize(mm) {
  if (mm % 10 === 0) return 12;
  return mm % 5 === 0 ? 6 : 3;
}

// 14px per millimetre
const STEP = 14;

const rulerTop = document.getElementById("rulerTop");
for (let mm = -13; mm <= 63; mm++) {
  const x = 195.5 + mm * STEP;
  add(rulerTop, "path", { class: "tick", d: `M${x} ${12 - tickSize(mm)}V12` });
  if (mm % 10 === 0) add(rulerTop, "text", { x: x - 0.5, y: 8 }, mm);
}
add(rulerTop, "path", { class: "tick", d: "M501.5 4V12" });
add(rulerTop, "path", { class: "edge", d: "M11 12.5H1092" });
add(rulerTop, "text", { x: 1087, y: 8 }, "мм");

const rulerLeft = document.getElementById("rulerLeft");
for (let mm = -7; mm <= 33; mm++) {
  const y = 106.5 + mm * STEP;
  add(rulerLeft, "path", { class: "tick", d: `M${11 - tickSize(mm)} ${y}H11` });
  if (mm % 10 === 0) add(rulerLeft, "text", { transform: `translate(8 ${y + 1}) rotate(-90)` }, mm);
}
add(rulerLeft, "path", { class: "tick", d: "M1 202.5H11" });
add(rulerLeft, "path", { class: "edge", d: "M11.5 0V572" });
```
